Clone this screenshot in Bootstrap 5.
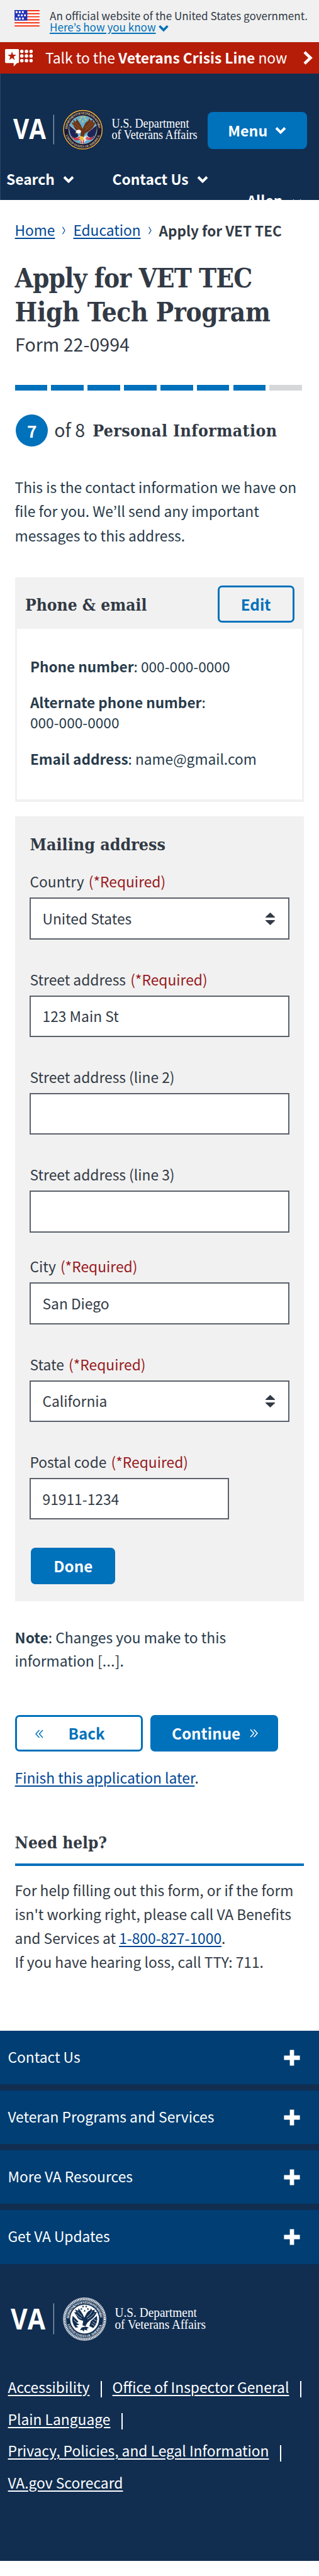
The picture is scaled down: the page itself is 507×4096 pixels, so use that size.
<!DOCTYPE html>
<html lang="en">
<head>
<meta charset="utf-8">
<meta name="viewport" content="width=device-width, initial-scale=1">
<title>Apply for VET TEC</title>
<link rel="stylesheet" href="https://cdn.jsdelivr.net/npm/bootstrap@5.3.0/dist/css/bootstrap.min.css">
<style>
:root{--navy:#112e51;--blue:#0071bb;--ink:#323a45;--deep:#283b4b;--link:#004795;--pale:#f1f1f1}
body{font-family:"Noto Sans CJK KR","Source Sans Pro",sans-serif;font-size:22.8px;line-height:34px;color:var(--ink);background:#fff;overflow-x:hidden}
svg{display:block;flex:none}
b,strong{font-weight:700}
a{text-decoration-thickness:1.6px;text-underline-offset:3px}
.slab{font-family:"DejaVu Serif Condensed","DejaVu Serif",serif;font-weight:700;color:var(--ink);margin:0}
.gov{height:66.6px;background:#f0f0f0;padding:15.5px 0 0 23px;font-size:17.08px;line-height:18.5px;gap:16px}
.gov a{color:var(--blue);text-underline-offset:2px}
.gov svg.chev{display:inline-block;margin-left:3px;vertical-align:-1px}
.crisis{height:50.7px;background:#b51d09;color:#fff;padding:0 10px 0 8px;white-space:pre}
.crisis .txt{margin-left:19.5px}
.top{height:200.4px;background:var(--navy);color:#fff;overflow:hidden;padding-top:56.7px;border-left:1px solid #29466a}
.top .logos{height:94px}
.menu{width:158.5px;height:59px;margin-top:4px;border-radius:8px;background:var(--blue);color:#fff;font-weight:700;font-size:23.2px;gap:12px;border:0}
.tabs{height:34.3px;padding-left:9px;font-weight:700}
.tabs .a{gap:13px;width:168.5px}
.user{font-weight:700;padding-left:391.5px;gap:14px}
main{padding:31.1px 23.6px 91.5px}
.crumbs{height:34px;gap:12px;font-size:22.7px;white-space:nowrap;padding-top:1px}
.crumbs b{font-size:22.5px}
.crumbs a,.lk{color:var(--link)}
.crumbs a{text-decoration-thickness:2px}
h1.slab{font-size:42px;line-height:54px;margin-top:33.3px;white-space:nowrap}
h1 .l1{letter-spacing:-.93px}
h1 .l2{letter-spacing:-.38px}
.formno{font-size:28.6px;line-height:40px;margin-top:2.7px;padding-left:.5px}
.segs{margin-top:45.1px;height:9.5px;gap:6.15px;overflow:hidden;margin-right:-3px}
.segs i{flex:0 0 51.7px;background:var(--blue)}
.segs i.off{background:#d6d7d9}
.step{margin-top:38px;height:51px}
.step .num{width:51px;height:51px;border-radius:50%;background:var(--blue);color:#fff;font-weight:700;font-size:26.4px;margin-left:1.6px}
.step .of{font-size:28.6px;line-height:40px;margin:-3px 0 0 10px;width:61px}
.step .slab{font-size:26.5px;letter-spacing:.38px}
.intro{margin:45.8px 0 0;line-height:38.2px;color:var(--deep);white-space:nowrap}
.review{margin-top:47.2px;height:356.6px;border:3px solid var(--pale);border-bottom-width:4.6px;border-radius:0}
.review .head{height:79.3px;background:var(--pale);padding:0 12.8px 0 13.4px}
.review .slab{font-size:26.2px;padding-top:3px}
.review .rows{padding:43.4px 0 0 21.3px;line-height:32.2px;color:var(--deep);font-size:22.7px}
.review p{margin:0 0 25.4px}
.review b{font-size:22.6px}
.act{height:58.6px;border-radius:7px;border:3px solid var(--blue);background:var(--blue);color:#fff;font-weight:700;font-size:24.2px;padding:0;line-height:34px}
.act.line{background:transparent;color:var(--blue)}
.addr{margin-top:23.7px;height:1247.8px;background:var(--pale);padding:26.9px 23.6px 0 23.9px}
.addr .slab{font-size:26.6px;line-height:36px;margin-bottom:24.2px}
.addr .form-label{display:block;margin:0 0 8px;height:34px;color:var(--ink)}
.addr .form-label span{color:#981b1e;margin-left:2px}
.addr .form-control,.addr .form-select{height:66.5px;border:2px solid #5b616b;border-radius:0;font-size:22.8px;line-height:34px;color:var(--ink);padding:0 17px 0 18px;margin-bottom:46.8px;background-color:#fff}
.addr .form-select{background-image:url("data:image/svg+xml,%3Csvg xmlns='http://www.w3.org/2000/svg' viewBox='0 0 15 20'%3E%3Cpath fill='%23323a45' d='M7.5 0 15 7v1H0V7zM0 12h15v1l-7.5 7L0 13z'/%3E%3C/svg%3E");background-size:15px 20px;background-position:right 21px center}
.addr .tight{margin-bottom:37.6px}
.addr .zip{width:317px;margin-bottom:44.2px}
.note{margin:38.8px 0 0;line-height:37.6px;color:var(--deep)}
.note span{font-family:"Open Sans",sans-serif;line-height:1;font-size:26px}
.pager{margin-top:66.9px;gap:12.5px}
.pager .act{width:203px}
.later{margin:24.4px 0 0}
.help{font-size:26px!important;line-height:36px;margin-top:68.1px!important;padding-bottom:15.1px;border-bottom:4.7px solid var(--blue)}
.helptxt{margin:19.9px 0 0;line-height:37.9px;white-space:nowrap}
main{padding-bottom:0;height:2911.2px}
footer{height:843.3px;background:var(--navy);color:#fff}
.fold{height:85.5px;margin-bottom:9.57px;background:#003e73;padding:0 30px 1px 12.4px}
.fold svg{margin-top:1px}
.flogo{margin-top:53px}
.flinks{margin:49.3px 0 0 12.6px;line-height:50.7px}
.flinks a{color:#fff}
.flinks div{height:50.7px}
.flinks i{width:1.6px;height:26px;background:#fff;margin:6px 17px 0 17.6px}
</style>
</head>
<body>
<svg width="0" height="0" class="position-absolute">
  <defs>
    <path id="chev" d="M2 2.5 9 9.5 16 2.5" fill="none" stroke="currentColor" stroke-width="4"/>
    <path id="arcT" d="M-92 0A92 92 0 0 1 92 0"/>
    <path id="arcB" d="M-106 0A106 106 0 0 0 106 0"/>
    <path id="st" d="M0-7 1.8-2.2 7-2.2 2.8.9 4.3 6 0 3-4.3 6-2.8.9-7-2.2-1.8-2.2Z"/>
  </defs>
</svg>

<div class="gov d-flex">
  <svg width="40" height="27" viewBox="0 0 50 34">
    <path fill="#fff" d="M0 0H50V34H0z"/>
    <path fill="#f52e0c" d="M0 0H50V2.4H0zM0 6H50V8.4H0zM0 12.2H50V14.6H0zM0 18.3H50V20.7H0zM0 24.3H50V26.7H0zM0 30.6H50V33.2H0z"/>
    <path fill="#2233b8" d="M0 0H25.5V21H0z"/>
    <path fill="#fff" d="M2.3 2.3h3.6v3.6H2.3zM8.5 2.3h3.6v3.6H8.5zM14.8 2.3h3.6v3.6h-3.6zM6.5 8.7h3.6v3.6H6.5zM12.7 8.7h3.6v3.6h-3.6zM19 8.7h3.6v3.6H19zM2.3 15.2h3.6v3.6H2.3zM8.5 15.2h3.6v3.6H8.5zM14.8 15.2h3.6v3.6h-3.6z"/>
  </svg>
  <div>An official website of the United States government.<br><a href="#">Here’s how you know</a><svg class="chev" style="color:#0071bb" width="18" height="12" viewBox="0 0 18 13"><use href="#chev"/></svg></div>
</div>

<div class="crisis d-flex align-items-center">
  <svg width="44.4" height="27.7" viewBox="30 240 168 105">
    <path fill="#fff" d="M36 240h72q6 0 6 6v72q0 6-6 6h-6l-20 21v-21H36q-6 0-6-6v-72q0-6 6-6z"/>
    <path fill="#b51d09" d="m72 255 6.600 19H98L82.500 286l6 20L72 294l-16.500 12 6-20L46 274h19.500z"/>
    <g fill="#fff"><circle cx="131" cy="254" r="10.500"/><circle cx="159" cy="254" r="10.500"/><circle cx="187" cy="254" r="10.500"/><circle cx="131" cy="282" r="10.500"/><circle cx="159" cy="282" r="10.500"/><circle cx="187" cy="282" r="10.500"/><circle cx="131" cy="310" r="10.500"/><circle cx="159" cy="310" r="10.500"/><circle cx="187" cy="310" r="10.500"/></g>
  </svg>
  <div class="txt">Talk to the <b>Veterans Crisis Line</b> now</div>
  <svg class="ms-auto" width="15" height="22" viewBox="0 0 15 22"><path d="M2 1.800 11.500 11 2 20.200" fill="none" stroke="#fff" stroke-width="4.600"/></svg>
</div>

<header class="top">
  <div class="logos d-flex align-items-start">
    <svg width="328.500" height="64.600" viewBox="1 0 328.500 64.600">
      <text x="21" y="47" font-family="Open Sans" font-weight="700" font-size="44.500" fill="#fff" textLength="52" lengthAdjust="spacingAndGlyphs">VA</text>
      <path d="M85.300 8.500V55.500" stroke="#b9c3cf" stroke-width="1"/>
      <g transform="translate(131.700 32.300) scale(.269)">
        <circle r="120" fill="#1a1838"/>
        <circle r="114" fill="none" stroke="#d9ac3c" stroke-width="6"/>
        <g fill="#d8c48c" font-family="Liberation Serif" font-weight="700" font-size="19">
          <text><textPath href="#arcT" startOffset="4" textLength="276">DEPARTMENT OF VETERANS AFFAIRS</textPath></text>
          <text><textPath href="#arcB" startOffset="32" textLength="266">UNITED STATES OF AMERICA</textPath></text>
        </g>
        <circle r="84" fill="#64aed0" stroke="#b89a50" stroke-width="2"/>
        <g fill="#f0d04a"><use href="#st" x="-9" y="-74"/><use href="#st" x="9" y="-74"/><use href="#st" x="-16" y="-60"/><use href="#st" x="16" y="-60"/><use href="#st" y="-49"/></g>
        <path fill="#1f2454" d="M-80-28-38 8-26 40-58 56Q-84 20-80-28zM82-28 34 4 24 40 60 54Q86 16 82-28z"/>
        <path stroke="#e8edf2" stroke-width="3" d="M-80-28-34 12M82-28 32 12"/>
        <path fill="#e9edf5" d="M-70 38Q-40 60-22 34L0 46 24 32Q46 60 68 34 52 66 20 62L4 80-12 84-16 62Q-54 68-70 38z"/>
        <path fill="none" stroke="#c32333" stroke-width="6" d="M-66 44Q-36 62-18 42M-52 56Q-32 64-14 54M62 42Q42 60 20 42M54 54Q38 62 16 52M-10 58-8 82M4 56 2 80"/>
        <path fill="#6b3417" d="M-12 16Q-44 8-54-22L-68-44Q-58-40-52-42L-60-60Q-44-50-40-48L-38-66Q-22-46-12-28L-2-6 8-26Q14-44 32-52L38-68 46-54 60-58 60-44 74-42Q64-10 32 10L12 22 2 46-14 36z"/>
        <path fill="none" stroke="#a3622f" stroke-width="3" d="M-56-32Q-36-12-18-2M-48-46Q-32-24-12-12M60-38Q40-14 16 0M50-50Q34-24 14-12"/>
        <path fill="#fff" d="M-34 2Q-18-4-10 8L-16 22-30 20-42 18Q-42 6-34 2z"/>
        <path fill="#f0c030" d="M-38 14-44 22-32 20zM-16 38 2 40 6 66-2 60-8 70-12 56-20 54z"/>
      </g>
      <g font-family="Liberation Serif" font-size="20.800" fill="#fff">
        <text x="177.500" y="29" textLength="123" lengthAdjust="spacingAndGlyphs">U.S. Department</text>
        <text x="177.500" y="47.300" textLength="136" lengthAdjust="spacingAndGlyphs">of Veterans Affairs</text>
      </g>
    </svg>
    <button class="menu d-flex align-items-center justify-content-center">Menu <svg width="18" height="13" viewBox="0 0 18 13"><use href="#chev"/></svg></button>
  </div>
  <div class="tabs d-flex">
    <div class="a d-flex align-items-center">Search <svg width="18" height="13" viewBox="0 0 18 13"><use href="#chev"/></svg></div>
    <div class="a d-flex align-items-center">Contact Us <svg width="18" height="13" viewBox="0 0 18 13"><use href="#chev"/></svg></div>
  </div>
  <div class="user d-flex align-items-center">Allen <svg width="18" height="13" viewBox="0 0 18 13" style="margin-top:7px"><use href="#chev"/></svg></div>
</header>

<main>
  <nav class="crumbs d-flex align-items-center">
    <a href="#">Home</a>
    <svg width="5" height="13" viewBox="0 0 5 13"><path d="M.5.800 4 6.500.500 12.200" fill="none" stroke="#1c5a9f" stroke-width="1.400"/></svg>
    <a href="#">Education</a>
    <svg width="5" height="13" viewBox="0 0 5 13"><path d="M.5.800 4 6.500.500 12.200" fill="none" stroke="#1c5a9f" stroke-width="1.400"/></svg>
    <b>Apply for VET TEC</b>
  </nav>
  <h1 class="slab"><span class="l1">Apply for VET TEC</span><br><span class="l2">High Tech Program</span></h1>
  <div class="formno">Form 22-0994</div>

  <div class="segs d-flex"><i></i><i></i><i></i><i></i><i></i><i></i><i></i><i class="off"></i></div>
  <div class="step d-flex align-items-center">
    <div class="num d-flex align-items-center justify-content-center">7</div>
    <div class="of">of 8</div>
    <h2 class="slab">Personal Information</h2>
  </div>

  <p class="intro">This is the contact information we have on<br>file for you. We’ll send any important<br>messages to this address.</p>

  <section class="review card">
    <div class="head d-flex align-items-center justify-content-between">
      <h3 class="slab">Phone &amp; email</h3>
      <button class="btn act line" style="width:122px">Edit</button>
    </div>
    <div class="rows">
      <p><b>Phone number</b>: 000-000-0000</p>
      <p><b>Alternate phone number</b>:<br>000-000-0000</p>
      <p><b>Email address</b>: name@gmail.com</p>
    </div>
  </section>

  <form class="addr">
    <h3 class="slab">Mailing address</h3>
    <label class="form-label">Country <span>(*Required)</span></label>
    <select class="form-select"><option>United States</option></select>
    <label class="form-label">Street address <span>(*Required)</span></label>
    <input class="form-control" value="123 Main St">
    <label class="form-label">Street address (line 2)</label>
    <input class="form-control">
    <label class="form-label">Street address (line 3)</label>
    <input class="form-control tight">
    <label class="form-label">City <span>(*Required)</span></label>
    <input class="form-control" value="San Diego">
    <label class="form-label">State <span>(*Required)</span></label>
    <select class="form-select"><option>California</option></select>
    <label class="form-label">Postal code <span>(*Required)</span></label>
    <input class="form-control zip" value="91911-1234">
    <button type="button" class="btn act" style="width:134.500px;margin-left:1.500px">Done</button>
  </form>

  <p class="note"><b>Note</b>: Changes you make to this<br>information [<span>…</span>].</p>

  <div class="pager d-flex">
    <button class="btn act line d-flex align-items-center"><svg width="13" height="14" viewBox="0 0 13 14" style="margin:2px 39.500px 0 29.500px"><path d="M6.500 1 1 7l5.500 6M12 1 6.500 7 12 13" fill="none" stroke="currentColor" stroke-width="1.500"/></svg>Back</button>
    <button class="btn act d-flex align-items-center" style="padding-left:31px">Continue<svg width="13" height="14" viewBox="0 0 13 14" style="margin-left:15px"><path d="M1 1 6.500 7 1 13M6.500 1 12 7 6.500 13" fill="none" stroke="currentColor" stroke-width="1.500"/></svg></button>
  </div>
  <p class="later"><a class="lk" href="#">Finish this application later</a>.</p>

  <h3 class="slab help">Need help?</h3>
  <p class="helptxt">For help filling out this form, or if the form<br>isn't working right, please call VA Benefits<br>and Services at <a class="lk" href="#">1-800-827-1000</a>.<br>If you have hearing loss, call TTY: 711.</p>
</main>

<footer>
  <div class="fold d-flex align-items-center justify-content-between">Contact Us<svg width="26" height="26" viewBox="0 0 26 26"><path d="M13 3.800V22.200M3.800 13H22.200" stroke="#fff" stroke-width="6.800" stroke-linecap="square"/></svg></div>
  <div class="fold d-flex align-items-center justify-content-between">Veteran Programs and Services<svg width="26" height="26" viewBox="0 0 26 26"><path d="M13 3.800V22.200M3.800 13H22.200" stroke="#fff" stroke-width="6.800" stroke-linecap="square"/></svg></div>
  <div class="fold d-flex align-items-center justify-content-between">More VA Resources<svg width="26" height="26" viewBox="0 0 26 26"><path d="M13 3.800V22.200M3.800 13H22.200" stroke="#fff" stroke-width="6.800" stroke-linecap="square"/></svg></div>
  <div class="fold d-flex align-items-center justify-content-between">Get VA Updates<svg width="26" height="26" viewBox="0 0 26 26"><path d="M13 3.800V22.200M3.800 13H22.200" stroke="#fff" stroke-width="6.800" stroke-linecap="square"/></svg></div>

  <svg class="flogo" width="340" height="69" viewBox="0 0 340 69">
    <text x="17" y="50.500" font-family="Open Sans" font-weight="700" font-size="47" fill="#fff" textLength="55" lengthAdjust="spacingAndGlyphs">VA</text>
    <path d="M85.300 9.500V58.700" stroke="#b9c3cf" stroke-width="1"/>
    <g transform="translate(134.500 34.500) scale(.287)">
      <circle r="118" fill="none" stroke="#fff" stroke-width="3"/>
      <circle r="111" fill="none" stroke="#fff" stroke-width="9" stroke-dasharray="6 3"/>
      <circle r="104" fill="none" stroke="#fff" stroke-width="2"/>
      <g fill="#fff" font-family="Liberation Serif" font-weight="700" font-size="19">
        <text transform="scale(.94)"><textPath href="#arcT" startOffset="4" textLength="276">DEPARTMENT OF VETERANS AFFAIRS</textPath></text>
        <text transform="scale(.94)"><textPath href="#arcB" startOffset="32" textLength="266">UNITED STATES OF AMERICA</textPath></text>
      </g>
      <circle r="80" fill="#fff"/>
      <g fill="#112e51">
        <use href="#st" x="-9" y="-70"/><use href="#st" x="9" y="-70"/><use href="#st" x="-18" y="-56"/><use href="#st" x="18" y="-56"/><use href="#st" y="-46"/>
        <path d="M-8 10Q-36 4-44-16L-58-38-46-38-54-54-36-46-34-60Q-20-44-10-26L-2-8 8-26Q16-44 30-48L36-60 42-48 56-52 54-38 68-40Q56-8 28 8L14 22 4 40-12 34z"/>
        <path d="M-66-18-34 14-44 22-28 30-48 36-34 44-50 48Q-76 20-66-18zM68-18 34 12 26 38 48 50Q76 20 68-18zM-16 46 8 42 24 48 12 54 16 64-2 58-4 70-14 60-26 62z"/>
      </g>
      <path stroke="#fff" stroke-width="2.500" fill="none" d="M-48-28Q-32-8-16-2M-40-42-14-14M54-32Q36-8 16 0M42-44Q28-20 12-10M-60 4-38 24M44 14 60 26M38 26 54 36M50 2 66 10"/>
    </g>
    <g font-family="Liberation Serif" font-size="20.600" fill="#fff">
      <text x="182.500" y="31.200" textLength="130.500" lengthAdjust="spacingAndGlyphs">U.S. Department</text>
      <text x="182.500" y="50.400" textLength="144.500" lengthAdjust="spacingAndGlyphs">of Veterans Affairs</text>
    </g>
  </svg>

  <div class="flinks">
    <div class="d-flex align-items-center"><a href="#">Accessibility</a><i></i><a href="#">Office of Inspector General</a><i></i></div>
    <div class="d-flex align-items-center"><a href="#">Plain Language</a><i></i></div>
    <div class="d-flex align-items-center"><a href="#">Privacy, Policies, and Legal Information</a><i></i></div>
    <div><a href="#">VA.gov Scorecard</a></div>
  </div>
</footer>
<script src="https://cdn.jsdelivr.net/npm/bootstrap@5.3.0/dist/js/bootstrap.bundle.min.js"></script>
</body>
</html>
